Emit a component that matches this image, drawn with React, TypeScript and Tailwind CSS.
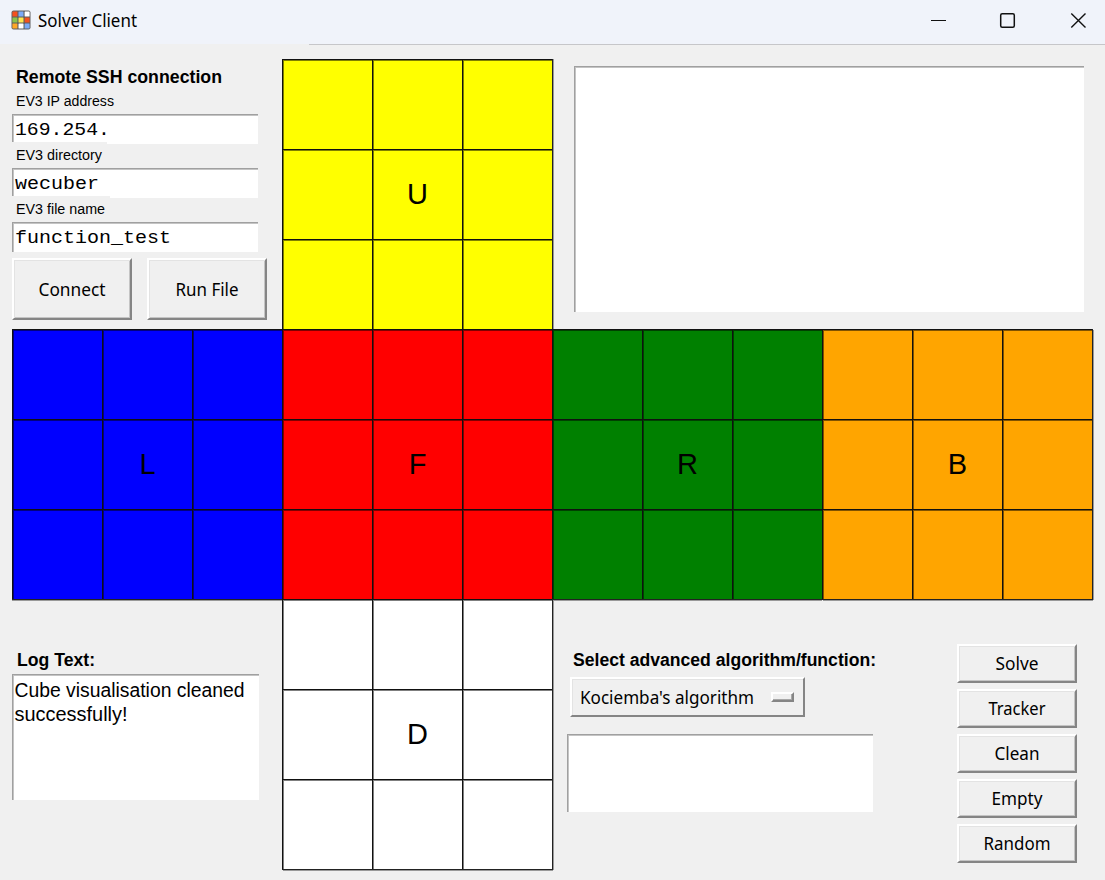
const ARIAL = "font-['Liberation_Sans',Arial,sans-serif]";
const SEGOE = "font-['Noto_Sans','Open_Sans',sans-serif]";
const SUNKEN = "bg-white border-t border-l border-[#a0a0a0] shadow-[inset_1px_1px_0_#c4c4c4]";
const RAISED = "border-2 border-t-white border-l-white border-r-[#858585] border-b-[#858585] bg-[#f0f0f0]";

interface LabelProps {
  text: string;
  /** Width of the box the label occupies. */
  width: number;
  height: number;
  baseline: number;
  /** Width of the text itself. */
  tw: number;
  x?: number;
  className: string;
}

function Label({ text, width, height, baseline, tw, x = 0, className }: LabelProps) {
  return (
    <svg width={width} height={height} className="block shrink-0 overflow-visible">
      <text x={x} y={baseline} textLength={tw} lengthAdjust="spacingAndGlyphs" className={className}>
        {text}
      </text>
    </svg>
  );
}

function Button({ text, tw, big = false }: { text: string; tw: number; big?: boolean }) {
  return (
    <button
      className={`flex w-[120px] shrink-0 items-center justify-center shadow-[inset_1px_1px_0_#e3e3e3,inset_-1px_-1px_0_#c4c4c4] ${RAISED} ${big ? "h-[62px]" : "h-[39px]"}`}
    >
      <Label text={text} width={tw} height={20} baseline={big ? 17 : 15.5} x={-0.5} tw={tw} className={`${SEGOE} text-[18px]`} />
    </button>
  );
}

const EDGES = {
  none: "",
  right: "shadow-[1px_0_0_#222,2px_0_0_#999]",
  bottom: "shadow-[0_1px_0_#222,0_2px_0_#999]",
  both: "shadow-[1px_0_0_#222,0_1px_0_#222,1px_1px_0_#222,2px_1px_0_#999,1px_2px_0_#999]",
};

function Face({ label, color, edge = "none" }: { label: string; color: string; edge?: keyof typeof EDGES }) {
  return (
    <div className={`grid h-[270px] w-[270px] grid-cols-3 grid-rows-3 ${color} ${EDGES[edge]}`}>
      {Array.from({ length: 9 }, (_, i) => (
        <div
          key={i}
          className={`flex items-center justify-center border-t border-l border-[#111] pb-px text-[29px] leading-none shadow-[inset_1px_1px_0_rgba(0,0,0,0.5)] ${ARIAL}`}
        >
          {i === 4 ? label : ""}
        </div>
      ))}
    </div>
  );
}

const ICON = ["#f4511e", "#7baaf7", "#ffffff", "#8bc34a", "#ffe64d", "#f4511e", "#ffa726", "#ffffff", "#7baaf7"];

function TitleBar() {
  return (
    <header className="flex h-[45px] shrink-0 flex-col bg-[#f0f3fa]">
      <div className="flex h-[44px] items-start">
        <svg width="20" height="20" viewBox="0 0 20 20" className="mt-[10px] ml-[11px]">
          <rect x="0.5" y="0.5" width="19" height="19" rx="2" fill="#5f5f5f" />
          {ICON.map((c, i) => (
            <rect key={i} x={1.4 + (i % 3) * 6.1} y={1.4 + Math.floor(i / 3) * 6.1} width="5" height="5" rx="0.5" fill={c} />
          ))}
        </svg>
        <div className="ml-[7px] pt-[10px]">
          <Label text="Solver Client" width={100} height={24} baseline={17} tw={99} className={`${SEGOE} text-[18.5px]`} />
        </div>
        <svg width="176" height="44" viewBox="0 0 176 44" className="ml-auto" fill="none" stroke="#111">
          <path d="M2 20.5H17" />
          <rect x="71.7" y="13.7" width="13.600" height="13.600" rx="1.5" strokeWidth="1.5" />
          <path d="M142.300 13.500L156.500 27.500M156.500 13.500L142.300 27.500" strokeWidth="1.400" />
        </svg>
      </div>
      <div className="flex h-px">
        <span className="w-[309px] bg-[#f0f0f0]" />
        <span className="flex-1 bg-[#c6c6c9]" />
      </div>
    </header>
  );
}

function Field({ label, lw, value, vw, notch }: { label: string; lw: number; value: string; vw: number; notch: string }) {
  return (
    <div className="flex h-[54px] flex-col">
      <Label text={label} width={200} height={21} baseline={12.5} x={4} tw={lw} className={`${ARIAL} text-[14px]`} />
      <div className={`relative h-[30px] w-[246px] ${SUNKEN}`}>
        <Label text={value} width={240} height={28} baseline={20} x={2} tw={vw} className="font-['Liberation_Mono','Courier_New',monospace] text-[19px]" />
        <div className={`absolute -bottom-px -left-px h-[3px] bg-[#f0f0f0] ${notch}`} />
      </div>
    </div>
  );
}

export default function App() {
  return (
    <div className="flex h-[880px] w-[1105px] flex-col overflow-hidden bg-[#f0f0f0] text-black">
      <TitleBar />
      <main className="grid grid-cols-[270px_270px_270px_270px] grid-rows-[270px_270px_270px] pt-[14px] pl-[12px]">
        <section className="h-[270px] pt-[8px]">
          <Label text="Remote SSH connection" width={220} height={26} baseline={16} x={4} tw={206} className={`${ARIAL} text-[18px] font-bold`} />
          <Field label="EV3 IP address" lw={98} value="169.254." vw={95} notch="w-[95px]" />
          <Field label="EV3 directory" lw={86} value="wecuber" vw={84} notch="w-[98px]" />
          <Field label="EV3 file name" lw={89} value="function_test" vw={156} notch="w-0" />
          <div className="mt-[3px] flex gap-[15px]">
            <Button text="Connect" tw={67} big />
            <Button text="Run File" tw={63} big />
          </div>
        </section>
        <Face label="U" color="bg-[#ffff00]" edge="right" />
        <section className="col-span-2 pt-[7px] pl-[22px]">
          <div className={`h-[246px] w-[510px] ${SUNKEN}`} />
        </section>

        <Face label="L" color="bg-[#0000ff]" edge="bottom" />
        <Face label="F" color="bg-[#ff0000]" />
        <Face label="R" color="bg-[#008000]" edge="bottom" />
        <Face label="B" color="bg-[#ffa500]" edge="both" />

        <section className="pt-[51px]">
          <Label text="Log Text:" width={200} height={24} baseline={16} x={5} tw={78} className={`${ARIAL} text-[18px] font-bold`} />
          <div className={`h-[126px] w-[247px] ${SUNKEN}`}>
            <Label text="Cube visualisation cleaned" width={240} height={24} baseline={22} x={1.5} tw={230} className={`${ARIAL} text-[20px]`} />
            <Label text="successfully!" width={240} height={24} baseline={22} x={1.5} tw={113} className={`${ARIAL} text-[20px]`} />
          </div>
        </section>
        <Face label="D" color="bg-white" edge="both" />
        <section className="col-span-2 flex">
          <div className="w-[405px] pt-[51px] pl-[15px]">
            <Label
              text="Select advanced algorithm/function:"
              width={310}
              height={27}
              baseline={16}
              x={6}
              tw={303}
              className={`${ARIAL} text-[18px] font-bold`}
            />
            <button className={`ml-[3px] flex h-[40px] w-[235px] items-center pl-[8px] shadow-[inset_1px_1px_0_#e3e3e3] ${RAISED}`}>
              <Label text="Kociemba's algorithm" width={174} height={20} baseline={17} tw={174} className={`${SEGOE} text-[18px]`} />
              <span className={`ml-[17px] h-[10px] w-[23px] shadow-[inset_-1px_-1px_0_#a8a8a8] ${RAISED}`} />
            </button>
            <div className={`mt-[17px] h-[78px] w-[306px] ${SUNKEN}`} />
          </div>
          <div className="flex flex-col gap-[6px] pt-[45px]">
            <Button text="Solve" tw={43} />
            <Button text="Tracker" tw={57} />
            <Button text="Clean" tw={45} />
            <Button text="Empty" tw={51} />
            <Button text="Random" tw={67} />
          </div>
        </section>
      </main>
    </div>
  );
}
